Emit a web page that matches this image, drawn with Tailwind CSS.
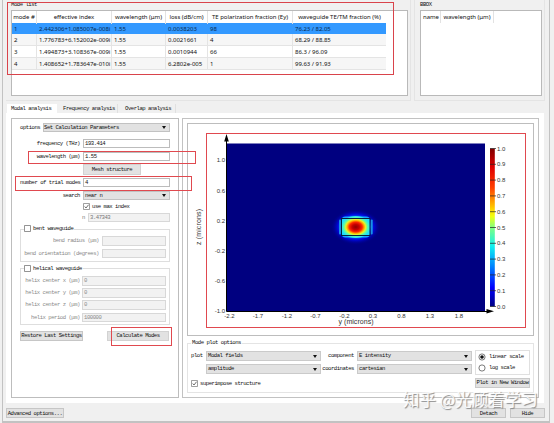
<!DOCTYPE html>
<html lang="en"><head><meta charset="utf-8"><title>Mode list</title>
<script src="https://cdn.jsdelivr.net/npm/@tailwindcss/browser@4"></script></head>
<body class="w-[554px] h-[423px] overflow-hidden bg-[#f0f0f0]">
<div class="relative w-[554px] h-[423px] overflow-hidden font-['Liberation_Mono',monospace] text-[5.6px] leading-[8px] tracking-[-0.48px] text-[#111] whitespace-nowrap">
<main class="ml-[2px] w-[548px] h-[423px] border-x border-b-2 border-[#c2c2c2] bg-[#f0f0f0] pl-[3px] flex flex-col">

  <section class="flex h-[104px] shrink-0">
    <div class="w-[405px] h-[101px] pl-[5px] border-b border-r border-[#e4e4e4]">
      <h2 class="h-[10px] leading-[10px]">Mode list</h2>
      <div class="w-[397px] h-[86px] border border-[#b9b9b9] bg-white font-['Noto_Sans','Open_Sans',sans-serif] text-[6px] tracking-[-0.02px]">
        <div class="grid grid-cols-[25px_75px_54px_42px_85px_93px] w-[374px] h-[12px] leading-[13px] text-center divide-x divide-[#e2e2e2]"><span>mode #</span><span>effective index</span><span>wavelength (μm)</span><span>loss (dB/cm)</span><span>TE polarization fraction (Ey)</span><span>waveguide TE/TM fraction (%)</span></div>
        <div class="grid grid-cols-[25px_75px_54px_42px_85px_93px] w-[374px] h-[11px] leading-[12px] bg-[#3399ff] text-[#082a50] *:pl-[2px] *:overflow-hidden"><span>1</span><span>2.442306+1.085007e-008i</span><span>1.55</span><span>0.0038203</span><span>98</span><span>76.23 / 82.05</span></div>
        <div class="grid grid-cols-[25px_75px_54px_42px_85px_93px] w-[374px] h-[12px] leading-[13px] bg-[#f6f6f6] border-b border-[#e4e4e4] divide-x divide-[#e4e4e4] *:pl-[2px] *:overflow-hidden"><span>2</span><span>1.776783+6.152002e-009i</span><span>1.55</span><span>0.0021661</span><span>4</span><span>68.29 / 88.85</span></div>
        <div class="grid grid-cols-[25px_75px_54px_42px_85px_93px] w-[374px] h-[12px] leading-[13px] border-b border-[#e4e4e4] divide-x divide-[#e4e4e4] *:pl-[2px] *:overflow-hidden"><span>3</span><span>1.494873+3.108367e-009i</span><span>1.55</span><span>0.0010944</span><span>66</span><span>86.3 / 96.09</span></div>
        <div class="grid grid-cols-[25px_75px_54px_42px_85px_93px] w-[374px] h-[12px] leading-[13px] bg-[#f6f6f6] border-b border-[#e4e4e4] divide-x divide-[#e4e4e4] *:pl-[2px] *:overflow-hidden"><span>4</span><span>1.408652+1.783647e-010i</span><span>1.55</span><span>6.2802e-005</span><span>1</span><span>99.63 / 91.93</span></div>
      </div>
    </div>
    <div class="ml-[3px] w-[131px] h-[101px] pl-[5px] border-x border-b border-[#e4e4e4]">
      <h2 class="h-[10px] leading-[10px]">BBOX</h2>
      <div class="w-[122px] h-[86px] border border-[#b9b9b9] bg-white flex font-['Noto_Sans',sans-serif] text-[6px] tracking-[-0.02px] leading-[13px]"><span class="w-[20px] h-[12px] pl-[2px] border-r border-[#e2e2e2]">name</span><span class="w-[53px] h-[12px] text-center border-r border-[#e2e2e2]">wavelength (μm)</span></div>
    </div>
  </section>

  <nav class="flex h-[9px] shrink-0 leading-[9px]">
    <span class="w-[50px] ml-px pl-[4px] bg-white">Modal analysis</span>
    <span class="w-[61px] pl-[6px] border-r border-[#e0e0e0]">Frequency analysis</span>
    <span class="w-[58px] pl-[7px] border-r border-[#e0e0e0]">Overlap analysis</span>
  </nav>

  <section class="bg-white w-[538px] h-[290px] shrink-0 flex pt-[5px] pl-[5px] gap-[3px]">
    <!-- calculation parameters -->
    <form class="w-[168px] h-[280px] border border-[#bdbdbd] pl-[8px] flex flex-col shrink-0">
      <div class="flex mt-[4px] h-[10px]"><label class="w-[20px] text-right leading-[9px] mr-[3px]">options</label><div class="w-[127px] h-[9px] bg-[#e2e2e2] border border-[#c2c2c2] flex items-center justify-between pr-[3px]"><span>Set Calculation Parameters</span><svg width="4" height="3"><path d="M0 0h4l-2 3z" fill="#111"/></svg></div></div>
      <div class="flex mt-[6px] h-[9px]"><label class="w-[60px] text-right leading-[10px] mr-[3px]">frequency (THz)</label><div class="w-[87px] h-[9px] border border-[#bcbcbc] pl-px leading-[7px]">193.414</div></div>
      <div class="flex mt-[4px] h-[9px]"><label class="w-[60px] text-right leading-[10px] mr-[3px]">wavelength (μm)</label><div class="w-[87px] h-[9px] border border-[#bcbcbc] pl-px leading-[7px]">1.55</div></div>
      <div class="mt-[3px] ml-[63px] w-[58px] h-[11px] bg-[#e2e2e2] border border-[#d2d2d2] text-center leading-[9px]">Mesh structure</div>
      <div class="flex mt-[3px] h-[9px]"><label class="w-[60px] text-right leading-[10px] mr-[3px]">number of trial modes</label><div class="w-[87px] h-[9px] border border-[#bcbcbc] pl-px leading-[7px]">4</div></div>
      <div class="flex mt-[4px] h-[9px]"><label class="w-[60px] text-right leading-[10px] mr-[3px]">search</label><div class="w-[87px] h-[9px] bg-[#e2e2e2] border border-[#c2c2c2] flex items-center justify-between pr-[3px] pl-px"><span>near n</span><svg width="4" height="3"><path d="M0 0h4l-2 3z" fill="#111"/></svg></div></div>
      <div class="flex mt-[3px] ml-[63px] h-[7px] leading-[7px] gap-[2px]"><svg width="7" height="7" fill="none"><path d="M.5.5h6v6h-6z" stroke="#777" stroke-width=".7"/><path d="M1.7 3.5 3 5 5.6 1.7" stroke="#333" stroke-width=".7"/></svg>use max index</div>
      <div class="flex mt-[3px] h-[9px] text-[#777]"><label class="w-[65px] text-right leading-[10px] mr-[3px]">n</label><div class="w-[82px] h-[9px] bg-[#f2f2f2] border border-[#d8d8d8] pl-px leading-[7px]">3.47343</div></div>
      <div class="mt-[7px] w-[150px] h-[33px] border border-[#dedede] text-[#8a8a8a]">
        <div class="flex w-fit bg-white pr-px -mt-[5px] ml-[3px] h-[7px] leading-[7px] gap-[2px] text-[#111]"><svg width="7" height="7"><path d="M.5.5h6v6h-6z" fill="#fff" stroke="#666" stroke-width=".7"/></svg>bent waveguide</div>
        <div class="flex mt-[4px] h-[9px]"><label class="w-[78px] text-right leading-[10px] mr-[3px]">bend radius (μm)</label><div class="w-[64px] h-[10px] bg-[#f2f2f2] border border-[#d8d8d8]"></div></div>
        <div class="flex mt-[4px] h-[9px]"><label class="w-[78px] text-right leading-[10px] mr-[3px]">bend orientation (degrees)</label><div class="w-[64px] h-[9px] bg-[#f2f2f2] border border-[#d8d8d8]"></div></div>
      </div>
      <div class="mt-[6px] w-[150px] h-[57px] border border-[#dedede] text-[#8a8a8a]">
        <div class="flex w-fit bg-white pr-px -mt-[4px] ml-[3px] h-[7px] leading-[7px] gap-[2px] text-[#111]"><svg width="7" height="7"><path d="M.5.5h6v6h-6z" fill="#fff" stroke="#666" stroke-width=".7"/></svg>helical waveguide</div>
        <div class="flex mt-[4px] h-[9px]"><label class="w-[59px] text-right leading-[10px] mr-[2px]">helix center x (μm)</label><div class="w-[84px] h-[10px] bg-[#f2f2f2] border border-[#d8d8d8] pl-px">0</div></div>
        <div class="flex mt-[3px] h-[9px]"><label class="w-[59px] text-right leading-[10px] mr-[2px]">helix center y (μm)</label><div class="w-[84px] h-[10px] bg-[#f2f2f2] border border-[#d8d8d8] pl-px">0</div></div>
        <div class="flex mt-[3px] h-[9px]"><label class="w-[59px] text-right leading-[10px] mr-[2px]">helix center z (μm)</label><div class="w-[84px] h-[10px] bg-[#f2f2f2] border border-[#d8d8d8] pl-px">0</div></div>
        <div class="flex mt-[4px] h-[9px]"><label class="w-[59px] text-right leading-[10px] mr-[2px]">helix period (μm)</label><div class="w-[84px] h-[9px] bg-[#f2f2f2] border border-[#d8d8d8] pl-px leading-[7px]">100000</div></div>
      </div>
      <div class="flex justify-between mt-[6px] w-[149px] h-[10px] leading-[8px] text-center"><div class="w-[63px] bg-[#e2e2e2] border border-[#c6c6c6]">Restore Last Settings</div><div class="w-[62px] bg-[#e2e2e2] border border-[#d2d2d2]">Calculate Modes</div></div>
    </form>

    <!-- mode plot -->
    <div class="w-[357px] h-[280px] border border-[#c2c2c2] pl-[4px] pt-[4px] shrink-0">
      <div class="w-[347px] h-[213px] border border-[#bdbdbd]">
        <svg width="345" height="211" viewBox="188 124 345 211" font-family="Liberation Sans, Arial, sans-serif" font-size="6" fill="#333" letter-spacing="0">
          <defs>
            <linearGradient id="jet" x1="0" y1="0" x2="0" y2="1"><stop offset="0" stop-color="#800000"/><stop offset=".12" stop-color="#e00000"/><stop offset=".25" stop-color="#ff4000"/><stop offset=".38" stop-color="#ffd000"/><stop offset=".43" stop-color="#f0ff10"/><stop offset=".5" stop-color="#80ff80"/><stop offset=".62" stop-color="#10f0f0"/><stop offset=".75" stop-color="#0080ff"/><stop offset=".88" stop-color="#0000ff"/><stop offset="1" stop-color="#000080"/></linearGradient>
            <radialGradient id="glow"><stop offset="0" stop-color="#00a0ff"/><stop offset=".55" stop-color="#0060ff"/><stop offset=".72" stop-color="#0008e8" stop-opacity=".85"/><stop offset="1" stop-color="#000080" stop-opacity="0"/></radialGradient>
            <radialGradient id="core"><stop offset="0" stop-color="#900000"/><stop offset=".25" stop-color="#c80000"/><stop offset=".45" stop-color="#ff2800"/><stop offset=".57" stop-color="#ffa000"/><stop offset=".68" stop-color="#f0f020"/><stop offset=".81" stop-color="#60ffa0"/><stop offset="1" stop-color="#20e0ff"/></radialGradient>
          </defs>
          <rect x="226" y="143.500" width="259" height="167.500" fill="#000080"/>
          <ellipse cx="355.700" cy="227" rx="25" ry="18" fill="url(#glow)"/>
          <rect x="339" y="219.500" width="2" height="15" rx="1" fill="#1890e8"/><rect x="370.700" y="219.500" width="2" height="15" rx="1" fill="#1890e8"/>
          <rect x="341.500" y="216.500" width="28.500" height="21" rx="4" fill="#18a8ff"/>
          <rect x="342" y="218" width="27.700" height="18" rx="3" fill="#20e0ff"/>
          <ellipse cx="355.700" cy="227" rx="14.500" ry="11" fill="url(#core)"/>
          <rect x="341.500" y="218.500" width="28.500" height="17" fill="none" stroke="#05203c" stroke-width="1"/>
          <path d="M226.500 138v173.500H488" fill="none" stroke="#000" stroke-width="1"/>
          <path d="M226.500 134l2.300 7.500h-4.600zM494 311.300l-7.500-2.300v4.600z" fill="#000"/>
          <g text-anchor="end"><text x="225" y="162.300">1.0</text><text x="225" y="192.500">0.6</text><text x="225" y="222.500">0.2</text><text x="225" y="252.500">-0.2</text><text x="225" y="283">-0.6</text><text x="225" y="313">-1.0</text></g>
          <g text-anchor="middle"><text x="229.500" y="317.500">-2.2</text><text x="258" y="317.500">-1.7</text><text x="287" y="317.500">-1.2</text><text x="315.500" y="317.500">-0.7</text><text x="344.500" y="317.500">-0.2</text><text x="373" y="317.500">0.3</text><text x="401.500" y="317.500">0.8</text><text x="430" y="317.500">1.3</text><text x="459" y="317.500">1.8</text></g>
          <text x="338.500" y="324" font-size="7" textLength="35">y (microns)</text>
          <text transform="translate(200.500 245) rotate(-90)" font-size="7" textLength="36">z (microns)</text>
          <rect x="490" y="148.500" width="4.800" height="158" fill="url(#jet)"/>
          <path d="M490 148.500h6M490 164.300h6M490 180.100h6M490 195.900h6M490 211.700h6M490 227.500h6M490 243.300h6M490 259.100h6M490 274.900h6M490 290.700h6M490 306.500h6" stroke="#222" stroke-width=".7"/>
          <g><text x="497" y="150.600">1.0</text><text x="497" y="166.400">0.9</text><text x="497" y="182.200">0.8</text><text x="497" y="198">0.7</text><text x="497" y="213.800">0.6</text><text x="497" y="229.600">0.5</text><text x="497" y="245.400">0.4</text><text x="497" y="261.200">0.3</text><text x="497" y="277">0.2</text><text x="497" y="292.800">0.1</text><text x="497" y="308.600">0.0</text></g>
        </svg>
      </div>
      <div class="mt-[7px] w-[347px] h-[50px] border border-[#e4e4e4] pl-[3px]">
        <h3 class="w-fit px-px -mt-[5px] h-[8px] bg-white">Mode plot options</h3>
        <div class="flex">
          <div class="w-[15px] pt-[5px]">plot</div>
          <div class="w-[115px] pt-[4px] flex flex-col gap-[3px]">
            <div class="h-[10px] bg-[#e2e2e2] border border-[#cacaca] flex items-center justify-between px-px pr-[3px]"><span>Modal fields</span><svg width="4" height="3"><path d="M0 0h4l-2 3z" fill="#111"/></svg></div>
            <div class="h-[10px] bg-[#e2e2e2] border border-[#cacaca] flex items-center justify-between px-px pr-[3px]"><span>amplitude</span><svg width="4" height="3"><path d="M0 0h4l-2 3z" fill="#111"/></svg></div>
          </div>
          <div class="w-[33px] pt-[5px] flex flex-col gap-[5px] text-right"><span>component</span><span>coordinates</span></div>
          <div class="ml-[3px] w-[115px] pt-[4px] flex flex-col gap-[3px]">
            <div class="h-[10px] bg-[#e2e2e2] border border-[#cacaca] flex items-center justify-between px-px pr-[3px]"><span>E intensity</span><svg width="4" height="3"><path d="M0 0h4l-2 3z" fill="#111"/></svg></div>
            <div class="h-[10px] bg-[#e2e2e2] border border-[#cacaca] flex items-center justify-between px-px pr-[3px]"><span>cartesian</span><svg width="4" height="3"><path d="M0 0h4l-2 3z" fill="#111"/></svg></div>
          </div>
          <div class="ml-[3px] mt-[3px] w-[55px] h-[25px] border border-[#e0e0e0] pl-[2px] pt-[2px] flex flex-col gap-[3px]">
            <div class="flex gap-[3px]"><svg width="8" height="8"><circle cx="4" cy="4" r="3.100" fill="#fff" stroke="#444" stroke-width=".7"/><circle cx="4" cy="4" r="1.800" fill="#111"/></svg>linear scale</div>
            <div class="flex gap-[3px]"><svg width="8" height="8"><circle cx="4" cy="4" r="3.100" fill="#fff" stroke="#444" stroke-width=".7"/></svg>log scale</div>
          </div>
        </div>
        <div class="flex justify-between w-[339px] pt-[3px]">
          <div class="flex gap-[2px] pt-[2px] leading-[7px]"><svg width="7" height="7" fill="none"><path d="M.5.5h6v6h-6z" stroke="#777" stroke-width=".7"/><path d="M1.700 3.500 3 5 5.600 1.700" stroke="#333" stroke-width=".7"/></svg>superimpose structure</div>
          <div class="w-[55px] h-[10px] bg-[#e2e2e2] border border-[#cacaca] text-center">Plot in New Window</div>
        </div>
      </div>
    </div>
  </section>

  <footer class="flex mt-[5px] h-[10px] shrink-0 text-center w-[539px] leading-[9px]">
    <div class="w-[58px] border border-[#c6c6c6] bg-[#e2e2e2]">Advanced options...</div>
    <div class="ml-auto w-[35px] border border-[#c6c6c6] bg-[#e2e2e2]">Detach</div>
    <div class="ml-[4px] w-[35px] border border-[#c6c6c6] bg-[#e2e2e2]">Hide</div>
  </footer>
</main>

<!-- annotation frames and watermark -->
<div class="absolute left-[7px] top-[2px] w-[387px] h-[73px] border border-[#d9434b]"></div>
<div class="absolute left-[28px] top-[151px] w-[168px] h-[13px] border border-[#e0494f]"></div>
<div class="absolute left-[15px] top-[176px] w-[177px] h-[15px] border border-[#e0494f]"></div>
<div class="absolute left-[111px] top-[327px] w-[61px] h-[19px] border border-[#e0494f]"></div>
<div class="absolute left-[206px] top-[133px] w-[320px] h-[195px] border border-[#e0494f]"></div>
<div class="absolute left-[403px] top-[390px] h-[17px] text-[16.5px] leading-[18px] tracking-[0px] font-['Noto_Sans_CJK_SC',sans-serif] text-white/90 [text-shadow:1px_1px_1px_#888]">知乎 @光顾着学习</div>
</div>
</body></html>
